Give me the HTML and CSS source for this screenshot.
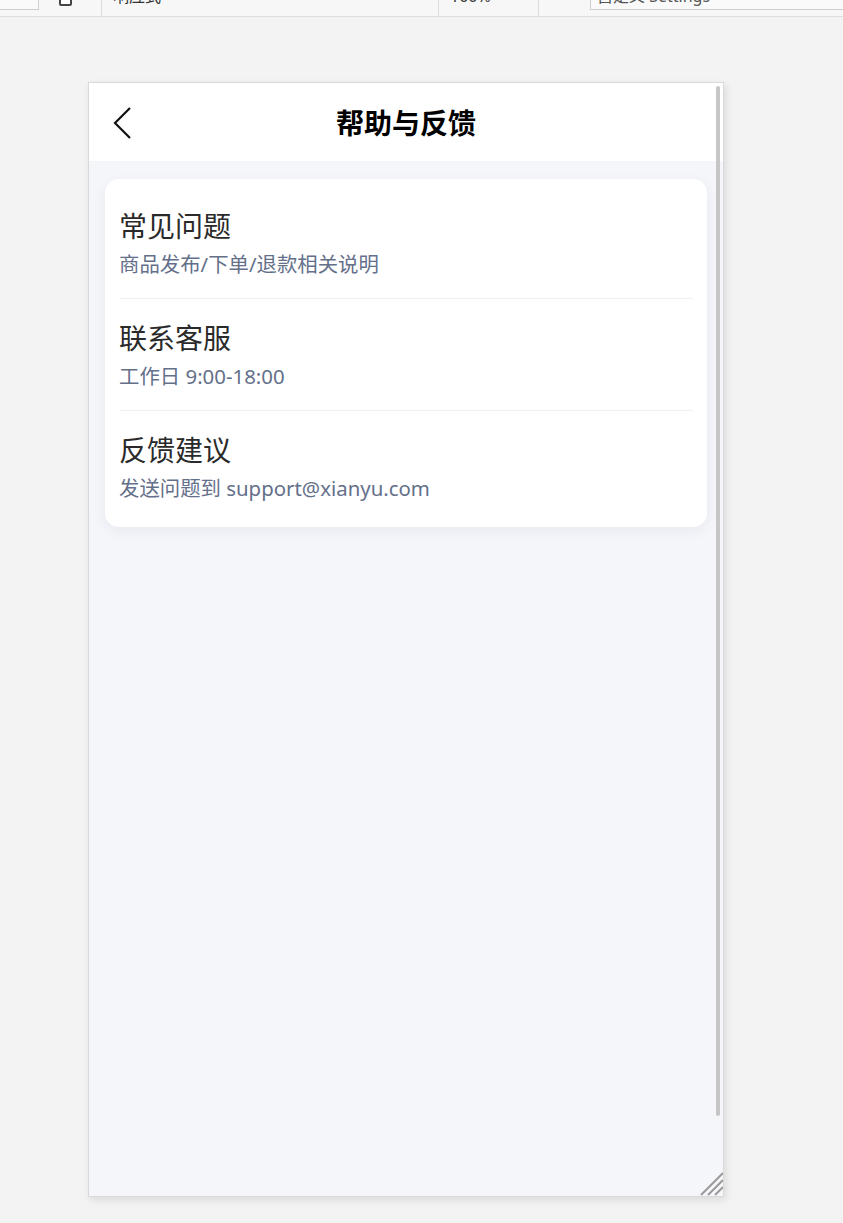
FILE: index.html
```html
<!DOCTYPE html>
<html lang="zh-CN">
<head>
<meta charset="utf-8">
<title>帮助与反馈</title>
<link rel="stylesheet" href="styles.css">
</head>
<body>
<div class="toolbar">
  <div class="tb-box"></div>
  <div class="tb-icon"><span class="phone"></span></div>
  <div class="tb-sep tb-field1"><span class="tb-text">响应式</span></div>
  <div class="tb-sep tb-field2"><span class="tb-text">100%</span></div>
  <div class="tb-sep tb-field3">
    <div class="tb-input"><span class="tb-text">自定义 Settings</span></div>
  </div>
</div>

<div class="stage">
  <div class="device">
    <header class="nav">
      <button class="back" aria-label="返回">
        <svg width="20" height="32" viewBox="0 0 20 32"><polyline points="17,1 2,16 17,31" fill="none" stroke="#111" stroke-width="2.2" stroke-linejoin="miter"/></svg>
      </button>
      <h1 class="nav-title">帮助与反馈</h1>
    </header>
    <main class="content">
      <section class="card">
        <div class="item">
          <div class="item-title">常见问题</div>
          <div class="item-sub">商品发布/下单/退款相关说明</div>
        </div>
        <div class="item">
          <div class="item-title">联系客服</div>
          <div class="item-sub">工作日 9:00-18:00</div>
        </div>
        <div class="item">
          <div class="item-title">反馈建议</div>
          <div class="item-sub">发送问题到 support@xianyu.com</div>
        </div>
      </section>
    </main>
    <div class="scrollbar"></div>
    <svg class="grip" width="24" height="24" viewBox="0 0 24 24">
      <line x1="24" y1="1" x2="2" y2="23" stroke="#9a9a9a" stroke-width="2"/>
      <line x1="24" y1="8" x2="9" y2="23" stroke="#9a9a9a" stroke-width="2"/>
      <line x1="24" y1="15" x2="16" y2="23" stroke="#9a9a9a" stroke-width="2"/>
    </svg>
  </div>
</div>
</body>
</html>
```
FILE: styles.css
```css
* { box-sizing: border-box; }
html, body { margin: 0; padding: 0; }
body {
  background: #f3f3f3;
  font-family: "Noto Sans", "Noto Sans CJK SC", sans-serif;
  width: 843px;
  height: 1223px;
  overflow: hidden;
}

.toolbar {
  height: 17px;
  background: #f7f7f7;
  border-bottom: 1px solid #dedede;
  display: flex;
  align-items: stretch;
  overflow: hidden;
}
.tb-box {
  width: 39px;
  height: 10px;
  background: #fafafa;
  border-right: 1px solid #cfcfcf;
  border-bottom: 1px solid #cfcfcf;
}
.tb-icon {
  width: 62px;
  position: relative;
}
.phone {
  position: absolute;
  left: 20px;
  top: -8px;
  width: 13px;
  height: 14px;
  border: 2px solid #444;
  border-radius: 2px;
  background: #fff;
}
.tb-sep {
  border-left: 1px solid #dcdcdc;
  position: relative;
  overflow: hidden;
}
.tb-field1 { width: 337px; }
.tb-field2 { width: 100px; }
.tb-field3 { flex: 1; padding-left: 51px; }
.tb-text {
  position: absolute;
  left: 11px;
  top: -14px;
  font-size: 16px;
  line-height: 20px;
  color: #333;
  white-space: nowrap;
}
.tb-input {
  position: relative;
  height: 10px;
  border-left: 1px solid #cfcfcf;
  border-bottom: 1px solid #cfcfcf;
  background: #fafafa;
}
.tb-input .tb-text { left: 6px; color: #555; }

.stage {
  padding: 65px 0 0 88px;
}
.device {
  position: relative;
  width: 636px;
  height: 1115px;
  border: 1px solid #d9d9d9;
  background: #f5f6fa;
  box-shadow: 2px 3px 8px rgba(0,0,0,0.10);
  display: flex;
  flex-direction: column;
}

.nav {
  height: 78px;
  background: #fff;
  display: flex;
  align-items: center;
  justify-content: center;
  position: relative;
}
.back {
  position: absolute;
  left: 24px;
  top: 24px;
  padding: 0;
  border: 0;
  background: transparent;
  width: 20px;
  height: 32px;
}
.back svg { display: block; }
.nav-title {
  margin: 0;
  font-size: 28px;
  font-weight: 700;
  color: #000;
  line-height: 36px;
  margin-top: 2px;
}

.content {
  flex: 1;
  padding: 18px 16px 0 16px;
}
.card {
  background: #fff;
  border-radius: 14px;
  padding: 8px 14px 5px;
  box-shadow: 0 4px 14px rgba(20, 30, 60, 0.06);
}
.item {
  padding: 21px 0 20px;
  border-bottom: 1px solid #eef0f3;
  display: flex;
  flex-direction: column;
  gap: 6px;
}
.item:last-child { border-bottom: 0; }
.item-title {
  font-size: 28px;
  line-height: 36px;
  color: #2a2a2a;
}
.item-sub {
  font-size: 20.4px;
  line-height: 28px;
  color: #64708a;
}

.scrollbar {
  position: absolute;
  right: 3px;
  top: 3px;
  width: 4px;
  height: 1030px;
  border-radius: 2px;
  background: #c6c6c6;
}
.grip {
  position: absolute;
  right: 0;
  bottom: 0;
}
```
